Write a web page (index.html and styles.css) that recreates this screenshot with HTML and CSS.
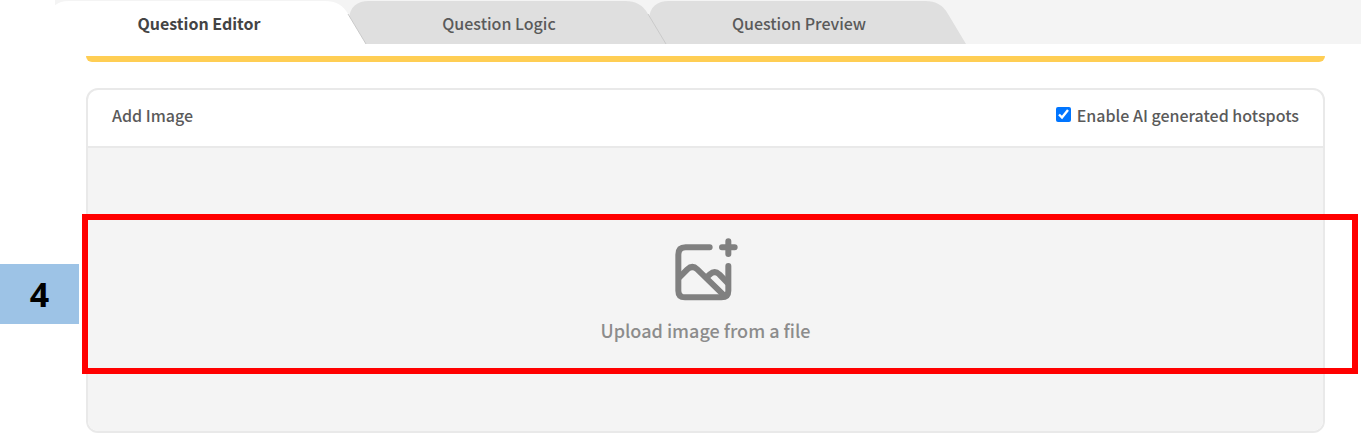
FILE: index.html
```
<!DOCTYPE html>
<html lang="en">
<head>
    <meta charset="UTF-8">
    <meta name="viewport" content="width=device-width, initial-scale=1.0">
    <title>Question Editor</title>
    <link rel="stylesheet" href="styles.css">
</head>
<body>
    <nav class="tabs">
        <button class="tab active" type="button">
            <svg class="tab-shape" viewBox="0 0 318 44">
                <path d="M0 44V18Q2 1 20 1H276Q292 1 299 14L317 44"/>
                <path class="edge" d="M299 14L317 44"/>
            </svg>
            <span>Question Editor</span>
        </button>
        <button class="tab" type="button">
            <svg class="tab-shape" viewBox="0 0 318 44">
                <path d="M0 44V18Q2 1 20 1H276Q292 1 299 14L317 44"/>
                <path class="edge" d="M299 14L317 44"/>
            </svg>
            <span>Question Logic</span>
        </button>
        <button class="tab" type="button">
            <svg class="tab-shape" viewBox="0 0 318 44">
                <path d="M0 44V18Q2 1 20 1H276Q292 1 299 14L317 44"/>
            </svg>
            <span>Question Preview</span>
        </button>
    </nav>

    <main class="editor">
        <div class="accent"></div>
        <section class="card">
            <header class="card-header">
                <h2>Add Image</h2>
                <label class="option" for="aiHotspots">
                    <input type="checkbox" id="aiHotspots" checked>
                    <span>Enable AI generated hotspots</span>
                </label>
            </header>
            <div class="dropzone">
                <button class="upload" type="button">
                    <svg class="upload-icon" viewBox="-3 0 195 195">
                        <path d="M107 31H35Q13 31 13 53V161Q13 181 33 181H142Q163 181 163 161V87"/>
                        <path d="M163 13V51M144 31H182"/>
                        <path d="M16 121L40 97Q55 83 70 97L150 175"/>
                        <path d="M98 121L108 112Q122 99 136 112L160 137"/>
                    </svg>
                    <span>Upload image from a file</span>
                </button>
            </div>
        </section>
        <div class="highlight"></div>
        <div class="step">4</div>
    </main>
</body>
</html>
```

FILE: styles.css
```
* {
    box-sizing: border-box;
}
body {
    margin: 0;
    background-color: #fff;
    font-family: "Noto Sans CJK SC", "Open Sans", sans-serif;
    color: #5a5a5a;
}
button {
    padding: 0;
    border: none;
    background: none;
    font-family: inherit;
    cursor: pointer;
}

/* Tabs */
.tabs {
    display: flex;
    height: 44px;
    margin-left: 55px;
    overflow: hidden;
    background-color: #f4f4f4;
}
.tab {
    position: relative;
    flex: 0 0 300px;
    height: 44px;
    padding-top: 2px;
    font-size: 16px;
    font-weight: 500;
    line-height: 24px;
    color: #5a5a5a;
    z-index: 1;
}
.tab:nth-child(2) {
    z-index: 2;
}
.tab.active {
    margin-left: -6px;
    font-weight: 700;
    color: #444;
    z-index: 3;
}
.tab-shape {
    position: absolute;
    top: 0;
    left: 0;
    width: 318px;
    height: 44px;
    fill: #dfdfdf;
}
.tab.active .tab-shape {
    fill: #fff;
}
.tab-shape .edge {
    fill: none;
    stroke: #cacaca;
}
.tab span {
    position: relative;
}

/* Editor */
.editor {
    position: relative;
    padding: 12px 36px 10px 86px;
}
.accent {
    height: 6px;
    margin-bottom: 26px;
    background-color: #ffce54;
    border-radius: 0 0 6px 6px;
}
.card {
    border: 2px solid #e9e9e9;
    border-radius: 12px;
    overflow: hidden;
}
.card-header {
    display: flex;
    align-items: center;
    justify-content: space-between;
    height: 58px;
    padding: 0 24px 6px;
    border-bottom: 2px solid #e9e9e9;
}
.card-header h2 {
    margin: 0;
    font-size: 16px;
    font-weight: 500;
    line-height: 24px;
}
.option {
    display: flex;
    align-items: center;
    gap: 6px;
    font-size: 16px;
    font-weight: 500;
    line-height: 24px;
}
.option input {
    width: 15px;
    height: 15px;
    margin: 0 0 2px;
    accent-color: #0075ff;
}
.dropzone {
    display: flex;
    justify-content: center;
    padding: 89px 0 87px;
    background-color: #f4f4f4;
}
.upload {
    display: flex;
    flex-direction: column;
    align-items: center;
    gap: 14px;
    font-size: 18px;
    font-weight: 500;
    line-height: 28px;
    color: #8c8c8c;
}
.upload-icon {
    width: 65px;
    height: 65px;
    fill: none;
    stroke: #808080;
    stroke-width: 18;
    stroke-linecap: round;
    stroke-linejoin: round;
}

/* Step callout */
.highlight {
    position: absolute;
    top: 170px;
    left: 82px;
    right: 3px;
    height: 160px;
    border: 6px solid #f00;
    pointer-events: none;
}
.step {
    position: absolute;
    top: 220px;
    left: 0;
    width: 79px;
    height: 60px;
    background-color: #9dc3e6;
    color: #000;
    font-family: "Open Sans", "Noto Sans", sans-serif;
    font-size: 34px;
    font-weight: 700;
    line-height: 60px;
    text-align: center;
}
```
